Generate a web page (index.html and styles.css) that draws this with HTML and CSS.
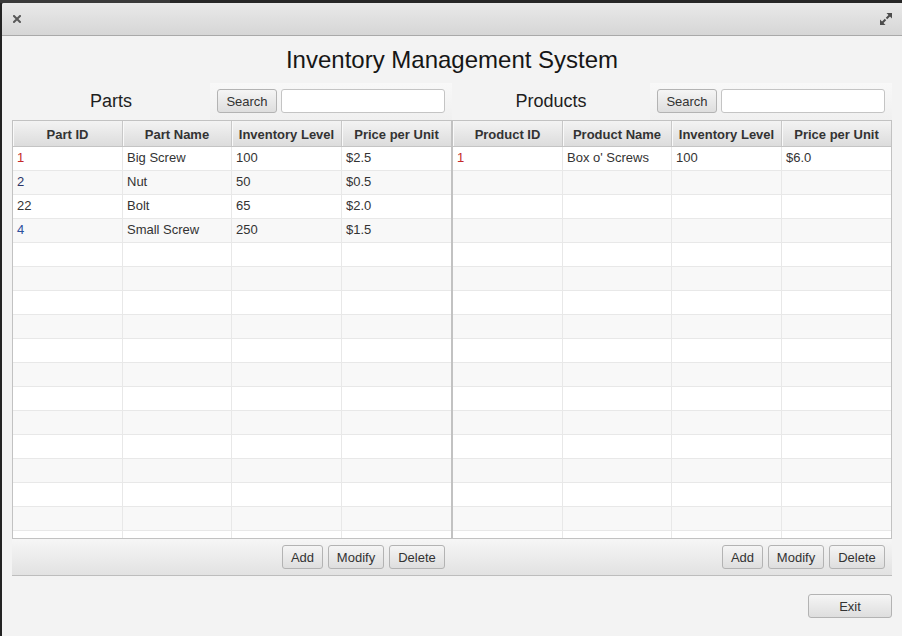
FILE: index.html
```html
<!DOCTYPE html>
<html>
<head>
<meta charset="utf-8">
<title>Inventory Management System</title>
<link rel="stylesheet" href="styles.css">
</head>
<body>
<div class="desktop-top"></div>
<div class="screen">
  <div class="desktop-left"></div>
  <div class="window">
    <div class="titlebar">
      <svg class="icon-close" width="8" height="8" viewBox="0 0 8 8"><path d="M1 1L7 7M7 1L1 7" stroke="#595959" stroke-width="2" stroke-linecap="square"/></svg>
      <svg class="icon-max" width="12" height="12" viewBox="0 0 12 12"><path d="M6.5 0H12V5.5Z M0 6.5V12H5.5Z" fill="#4d4d4d"/><path d="M10 2L6.5 5.5M2 10L5.5 6.5" stroke="#4d4d4d" stroke-width="2"/></svg>
    </div>
    <div class="content">
      <h1 class="title">Inventory Management System</h1>
      <div class="panels">
        <section class="panel">
          <div class="panel-head">
            <div class="panel-label">Parts</div>
            <div class="toolbar"><button class="btn btn-search">Search</button><input class="field" type="text"></div>
          </div>
          <div class="table">
            <div class="thead"><div class="th">Part ID</div><div class="th">Part Name</div><div class="th">Inventory Level</div><div class="th">Price per Unit</div></div>
            <div class="tbody">
              <div class="tr"><div class="td id-red">1</div><div class="td">Big Screw</div><div class="td">100</div><div class="td">$2.5</div></div>
              <div class="tr"><div class="td id-navy">2</div><div class="td">Nut</div><div class="td">50</div><div class="td">$0.5</div></div>
              <div class="tr"><div class="td">22</div><div class="td">Bolt</div><div class="td">65</div><div class="td">$2.0</div></div>
              <div class="tr"><div class="td id-blue">4</div><div class="td">Small Screw</div><div class="td">250</div><div class="td">$1.5</div></div>
              <div class="tr"><div class="td"></div><div class="td"></div><div class="td"></div><div class="td"></div></div>
              <div class="tr"><div class="td"></div><div class="td"></div><div class="td"></div><div class="td"></div></div>
              <div class="tr"><div class="td"></div><div class="td"></div><div class="td"></div><div class="td"></div></div>
              <div class="tr"><div class="td"></div><div class="td"></div><div class="td"></div><div class="td"></div></div>
              <div class="tr"><div class="td"></div><div class="td"></div><div class="td"></div><div class="td"></div></div>
              <div class="tr"><div class="td"></div><div class="td"></div><div class="td"></div><div class="td"></div></div>
              <div class="tr"><div class="td"></div><div class="td"></div><div class="td"></div><div class="td"></div></div>
              <div class="tr"><div class="td"></div><div class="td"></div><div class="td"></div><div class="td"></div></div>
              <div class="tr"><div class="td"></div><div class="td"></div><div class="td"></div><div class="td"></div></div>
              <div class="tr"><div class="td"></div><div class="td"></div><div class="td"></div><div class="td"></div></div>
              <div class="tr"><div class="td"></div><div class="td"></div><div class="td"></div><div class="td"></div></div>
              <div class="tr"><div class="td"></div><div class="td"></div><div class="td"></div><div class="td"></div></div>
              <div class="tr"><div class="td"></div><div class="td"></div><div class="td"></div><div class="td"></div></div>
            </div>
          </div>
          <div class="buttonbar"><button class="btn btn-add">Add</button><button class="btn btn-wide">Modify</button><button class="btn btn-wide">Delete</button></div>
        </section>
        <section class="panel">
          <div class="panel-head">
            <div class="panel-label">Products</div>
            <div class="toolbar"><button class="btn btn-search">Search</button><input class="field" type="text"></div>
          </div>
          <div class="table">
            <div class="thead"><div class="th">Product ID</div><div class="th">Product Name</div><div class="th">Inventory Level</div><div class="th">Price per Unit</div></div>
            <div class="tbody">
              <div class="tr"><div class="td id-red">1</div><div class="td">Box o' Screws</div><div class="td">100</div><div class="td">$6.0</div></div>
              <div class="tr"><div class="td"></div><div class="td"></div><div class="td"></div><div class="td"></div></div>
              <div class="tr"><div class="td"></div><div class="td"></div><div class="td"></div><div class="td"></div></div>
              <div class="tr"><div class="td"></div><div class="td"></div><div class="td"></div><div class="td"></div></div>
              <div class="tr"><div class="td"></div><div class="td"></div><div class="td"></div><div class="td"></div></div>
              <div class="tr"><div class="td"></div><div class="td"></div><div class="td"></div><div class="td"></div></div>
              <div class="tr"><div class="td"></div><div class="td"></div><div class="td"></div><div class="td"></div></div>
              <div class="tr"><div class="td"></div><div class="td"></div><div class="td"></div><div class="td"></div></div>
              <div class="tr"><div class="td"></div><div class="td"></div><div class="td"></div><div class="td"></div></div>
              <div class="tr"><div class="td"></div><div class="td"></div><div class="td"></div><div class="td"></div></div>
              <div class="tr"><div class="td"></div><div class="td"></div><div class="td"></div><div class="td"></div></div>
              <div class="tr"><div class="td"></div><div class="td"></div><div class="td"></div><div class="td"></div></div>
              <div class="tr"><div class="td"></div><div class="td"></div><div class="td"></div><div class="td"></div></div>
              <div class="tr"><div class="td"></div><div class="td"></div><div class="td"></div><div class="td"></div></div>
              <div class="tr"><div class="td"></div><div class="td"></div><div class="td"></div><div class="td"></div></div>
              <div class="tr"><div class="td"></div><div class="td"></div><div class="td"></div><div class="td"></div></div>
              <div class="tr"><div class="td"></div><div class="td"></div><div class="td"></div><div class="td"></div></div>
            </div>
          </div>
          <div class="buttonbar"><button class="btn btn-add">Add</button><button class="btn btn-wide">Modify</button><button class="btn btn-wide">Delete</button></div>
        </section>
      </div>
      <div class="footer"><button class="btn btn-exit">Exit</button></div>
    </div>
  </div>
</div>
</body>
</html>
```
FILE: styles.css
```css
html, body {
  margin: 0;
  padding: 0;
}
body {
  background: #262626;
  width: 902px;
  height: 636px;
  overflow: hidden;
  font-family: "Liberation Sans", Arial, sans-serif;
}
.desktop-top {
  height: 3px;
  background: linear-gradient(90deg, #3a3a3a 0, #3a3a3a 170px, #262626 170px);
}
.screen {
  display: flex;
  height: 633px;
}
.desktop-left {
  width: 2px;
  flex: none;
  background: #232323;
}
.window {
  flex: 1;
  display: flex;
  flex-direction: column;
  background: #f3f3f3;
  border-top-left-radius: 2px;
  overflow: hidden;
}
.titlebar {
  height: 33px;
  box-sizing: border-box;
  flex: none;
  display: flex;
  align-items: center;
  justify-content: space-between;
  padding: 0 10px 0 11px;
  background: linear-gradient(#e9e9e9, #d6d6d6);
  border-bottom: 1px solid #a9a9a9;
}
.icon-close, .icon-max {
  display: block;
}
.content {
  padding: 0 10px;
}
.title {
  margin: 0;
  padding: 10px 0 9px;
  font-size: 24px;
  line-height: 28px;
  font-weight: normal;
  text-align: center;
  color: #161616;
}
.panels {
  display: flex;
}
.panel {
  width: 440px;
  flex: none;
  display: flex;
  flex-direction: column;
}
.panel-head {
  display: flex;
  height: 37px;
}
.panel-label {
  width: 198px;
  flex: none;
  display: flex;
  align-items: center;
  justify-content: center;
  font-size: 18px;
  color: #1e1e1e;
}
.toolbar {
  width: 242px;
  flex: none;
  box-sizing: border-box;
  display: flex;
  align-items: flex-start;
  gap: 4px;
  padding: 6px 7px 0;
  background: linear-gradient(#f8f8f8, #f0f0f0);
}
.btn {
  height: 24px;
  box-sizing: border-box;
  flex: none;
  margin: 0;
  padding: 0;
  border: 1px solid #b3b3b3;
  border-radius: 3px;
  background: linear-gradient(#f5f5f5, #dedede);
  font: 13px "Liberation Sans", Arial, sans-serif;
  color: #333;
  text-align: center;
}
.btn-search {
  width: 60px;
}
.btn-add {
  width: 41px;
}
.btn-wide {
  width: 56px;
}
.btn-exit {
  width: 84px;
}
.field {
  flex: 1;
  min-width: 0;
  height: 24px;
  box-sizing: border-box;
  margin: 0;
  border: 1px solid #c4c4c4;
  border-radius: 3px;
  background: #fff;
}
.table {
  height: 419px;
  box-sizing: border-box;
  border: 1px solid #c2c2c2;
  background: #fff;
  display: flex;
  flex-direction: column;
  overflow: hidden;
}
.thead, .tr {
  display: grid;
  grid-template-columns: 110px 109px 110px 109px;
}
.thead {
  flex: none;
  height: 26px;
  box-sizing: border-box;
  border-bottom: 1px solid #c4c4c4;
  background: linear-gradient(#f3f3f3, #dcdcdc);
}
.th {
  display: flex;
  align-items: center;
  justify-content: center;
  padding-top: 1px;
  border-right: 1px solid #c8c8c8;
  box-shadow: inset 1px 0 #f9f9f9;
  font-size: 13px;
  font-weight: bold;
  color: #333;
  white-space: nowrap;
}
.th:last-child {
  border-right: none;
}
.tbody {
  flex: 1;
  overflow: hidden;
}
.tr {
  height: 24px;
  box-sizing: border-box;
  border-bottom: 1px solid #e8e8e8;
  background: #fff;
}
.tr:nth-child(even) {
  background: #f8f8f8;
}
.td {
  padding-left: 4px;
  border-right: 1px solid #e8e8e8;
  font-size: 13px;
  line-height: 22px;
  color: #333;
  white-space: nowrap;
  overflow: hidden;
}
.td:last-child {
  border-right: none;
}
.id-red {
  color: #c42a2a;
}
.id-navy {
  color: #2b3566;
}
.id-blue {
  color: #2d4f9c;
}
.buttonbar {
  height: 37px;
  box-sizing: border-box;
  display: flex;
  justify-content: flex-end;
  align-items: flex-start;
  gap: 5px;
  padding: 6px 7px 0;
  background: linear-gradient(#f6f6f6, #e2e2e2);
  border-bottom: 1px solid #bdbdbd;
}
.footer {
  display: flex;
  justify-content: flex-end;
  padding-top: 18px;
}
```
